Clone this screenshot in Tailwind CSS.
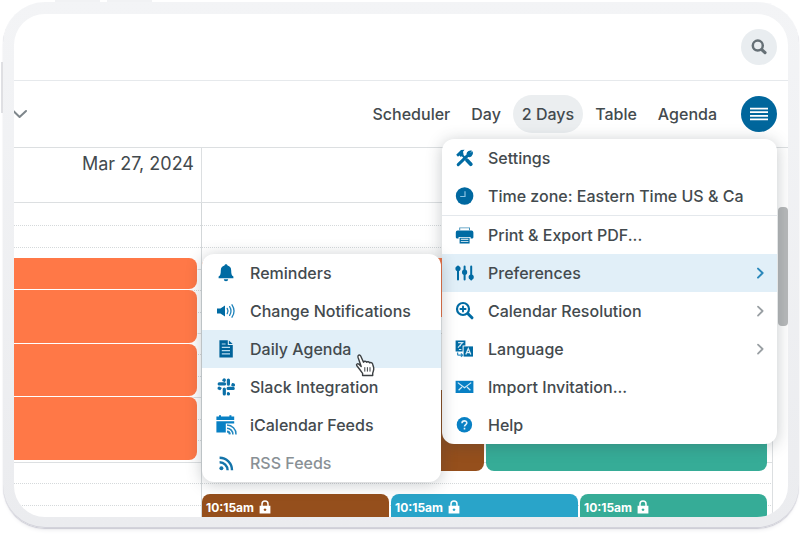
<!DOCTYPE html>
<html lang="en">
<head>
    <meta charset="UTF-8">
    <meta name="viewport" content="width=device-width, initial-scale=1.0">
    <title>Calendar</title>
    <script src="https://cdn.jsdelivr.net/npm/@tailwindcss/browser@4"></script>
</head>
<body class="bg-white font-['Inter','Liberation_Sans',sans-serif] text-[#434a4e]">

    <div class="relative h-screen overflow-hidden pt-[2px] pr-px pb-[14px] pl-[3px]">
        <!-- Device side buttons -->
        <span class="absolute left-px top-[62px] h-[51px] w-[3px] bg-[#dfe0e3]"></span>
        <span class="absolute left-[55px] top-0 h-[3px] w-[45px] bg-[#f1f2f4]"></span>
        <span class="absolute left-[107px] top-0 h-[3px] w-[45px] bg-[#f1f2f4]"></span>

        <div class="relative h-full rounded-[42px] bg-linear-to-b from-[#f3f4f6] to-[#ebecef] pt-3 pr-[11px] pb-[11px] pl-[11px] shadow-[inset_0_-1px_0_#d3d3db,0_1px_1px_#cbcbd4,0_4px_4px_-2px_#ececef]">
            <div class="flex h-full flex-col overflow-hidden rounded-[31px] bg-white">

                <header class="flex h-[67px] shrink-0 items-center justify-end border-b border-[#e6e9ec] pr-[11px]">
                    <button aria-label="Search" class="flex size-9 items-center justify-center rounded-full bg-[#e9edf0]">
                        <svg class="size-[18px]" viewBox="0 0 18 18" fill="none" stroke="#667076" stroke-linecap="round">
                            <circle cx="7.8" cy="7.6" r="5" stroke-width="2.5"/>
                            <path d="M12 11.8 15 14.6" stroke-width="3.2"/>
                        </svg>
                    </button>
                </header>

                <div class="relative z-10 flex h-[67px] shrink-0 items-center justify-between border-b border-[#dcdfe1] pr-[11px]">
                    <button aria-label="Choose period" class="-ml-1">
                        <svg class="h-3 w-[18px]" viewBox="0 0 18 12" fill="none" stroke="#7e868b" stroke-width="2" stroke-linecap="round" stroke-linejoin="round"><path d="M3.4 3 9.6 9 16 3"/></svg>
                    </button>
                    <div class="flex items-center">
                        <nav class="mr-[15px] flex items-center gap-[3px] text-[16px] font-medium">
                            <button class="h-[38px] px-[9px]">Scheduler</button>
                            <button class="h-[38px] px-[9px]">Day</button>
                            <button class="h-[38px] rounded-full bg-[#ebeef0] px-[9px]">2 Days</button>
                            <button class="h-[38px] px-[9px]">Table</button>
                            <button class="h-[38px] px-[9px]">Agenda</button>
                        </nav>
                        <div class="relative">
                            <button aria-label="Menu" class="flex size-9 items-center justify-center rounded-full bg-[#00669c]">
                                <svg class="size-[18px]" viewBox="0 0 18 18" stroke="#fff" stroke-width="1.8"><path d="M0 3.6H18M0 7.2H18M0 10.8H18M0 14.4H18"/></svg>
                            </button>

                            <!-- Main menu -->
                            <ul class="absolute right-0 top-full mt-[7px] w-[335px] rounded-xl bg-white text-[16px] font-medium shadow-[0_2px_16px_rgba(50,60,70,0.28)]">
                                <li><button class="flex h-[38px] w-full items-center gap-[13px] whitespace-nowrap pl-[13px]">
                                    <svg class="size-5 text-[#006ba3]" viewBox="0 0 20 20" fill="none" stroke="currentColor" stroke-linecap="round">
                                        <path d="M3.2 16.6 12 8.2" stroke-width="3"/>
                                        <path d="M15.8 3.2 14 5.2l.8 1L17.2 4.400A3.300 3.300 0 0 1 12.600 8.200 3.300 3.300 0 0 1 15.800 3.200Z" fill="currentColor" stroke-width="1.4"/>
                                        <path d="M6.8 6.8 10 10" stroke-width="2"/>
                                        <path d="M12 12.200 15.800 16.200" stroke-width="3.8"/>
                                        <path d="M1.2 6.800 6 2l3.600-.2-1.600 2 .6 2.800-2.800 2.400-1.400-1.600L3 8.800Z" fill="currentColor" stroke="none"/>
                                    </svg>
                                    Settings
                                </button></li>
                                <li class="border-b border-[#e4e8ec]"><button class="flex h-[38px] w-full items-center gap-[13px] whitespace-nowrap pl-[13px]">
                                    <svg class="size-5" viewBox="0 0 20 20" fill="none">
                                        <circle cx="9.6" cy="10" r="8.8" fill="#0068a0"/>
                                        <path d="M10 5.2V10.5H5.2" stroke="#8cc3e2" stroke-width="1.2"/>
                                    </svg>
                                    Time zone: Eastern Time US &amp; Ca
                                </button></li>
                                <li><button class="flex h-[38px] w-full items-center gap-[13px] whitespace-nowrap pl-[13px]">
                                    <svg class="size-5" viewBox="0 0 20 20" fill="#006ba3">
                                        <path d="M4.2 5.2V2.4h10.8v2.8h-1V3.3H5.2v1.9Z" opacity=".75"/>
                                        <path d="M2.6 5.6H16.6A1.8 1.8 0 0 1 18.400 7.400v4.800a1.400 1.400 0 0 1-1.400 1.400H15.600V12H3.600v1.600H2.200a1.400 1.400 0 0 1-1.400-1.400V7.400A1.800 1.800 0 0 1 2.600 5.600Z"/>
                                        <path d="M4.6 12.800H14.600V18.400H4.600Zm1.200 1v.9h7.600v-.9Zm0 2.100v.9h7.600v-.9Z" fill-rule="evenodd"/>
                                    </svg>
                                    Print &amp; Export PDF...
                                </button></li>
                                <li class="relative">
                                    <button class="flex h-[38px] w-full items-center gap-[13px] whitespace-nowrap bg-[#e1eff8] pl-[13px] pr-[11px]">
                                        <svg class="size-5" viewBox="0 0 20 20" fill="#006ba3" stroke="#006ba3" stroke-width="2" stroke-linecap="round">
                                            <path d="M3 3.400V16.600M9.600 3.400V16.600M16.200 3.400V16.600"/>
                                            <circle cx="3" cy="5.600" r="1.600"/><circle cx="9.600" cy="9.200" r="1.600"/><circle cx="16.200" cy="14" r="1.600"/>
                                        </svg>
                                        Preferences
                                        <svg class="ml-auto size-3" viewBox="0 0 12 12" fill="none" stroke="#2b88bb" stroke-width="2" stroke-linecap="round" stroke-linejoin="round"><path d="M4 1.6 8.6 6 4 10.6"/></svg>
                                    </button>

                                    <!-- Preferences submenu -->
                                    <ul class="absolute right-full top-0 mr-px w-[239px] rounded-xl bg-white shadow-[0_2px_16px_rgba(50,60,70,0.28)]">
                                        <li><button class="flex h-[38px] w-full items-center gap-3 whitespace-nowrap pl-[14px]">
                                            <svg class="h-5 w-[22px]" viewBox="0 0 22 20" fill="#006ba3">
                                                <path d="M10 1.200C10.900 1.200 11.500 1.800 11.500 2.600 14 3.200 15.200 5 15.200 7.400 15.200 11 15.700 12.400 17.400 13.600V15.200H2.600V13.600C4.300 12.400 4.800 11 4.800 7.400 4.800 5 6 3.200 8.500 2.600 8.500 1.800 9.100 1.200 10 1.200Z"/>
                                                <path d="M7.800 16.200H12.200A2.200 2 0 0 1 7.800 16.200Z"/>
                                            </svg>
                                            Reminders
                                        </button></li>
                                        <li><button class="flex h-[38px] w-full items-center gap-3 whitespace-nowrap pl-[14px]">
                                            <svg class="h-5 w-[22px]" viewBox="0 0 22 20" fill="none" stroke="#1f83bb" stroke-width="1.3" stroke-linecap="round">
                                                <path d="M1 7.400H4.400L9 4.400V15.600L4.400 12.600H1Z" fill="#006ba3" stroke="none"/>
                                                <path d="M11.200 7.400Q12.800 10 11.200 12.600M13.600 5.600Q16.400 10 13.600 14.400M16 3.800Q20.100 10 16 16.200"/>
                                            </svg>
                                            Change Notifications
                                        </button></li>
                                        <li class="relative">
                                            <button class="flex h-[38px] w-full items-center gap-3 whitespace-nowrap bg-[#e1eff8] pl-[14px]">
                                                <svg class="h-5 w-[22px]" viewBox="0 0 22 20">
                                                    <path d="M3.4 1.2H11.8V6H16.800V18.600H3.400Z" fill="#00639a"/>
                                                    <path d="M12.900 1.400 16.700 5H12.900Z" fill="#00639a"/>
                                                    <path d="M5.800 5H9.600M5.800 8.300H14M5.800 11.600H14M5.800 14.900H14" stroke="#b9dcef" stroke-width="1.2"/>
                                                </svg>
                                                Daily Agenda
                                            </button>
                                            <!-- Hand pointer -->
                                            <svg class="absolute left-[153px] top-[23px] h-6 w-[21px]" viewBox="0 0 21 24" fill="#fff" stroke="#3b3f42" stroke-width="1.4" stroke-linejoin="round">
                                                <path d="M7.600 22.500V20.400L4.400 16 1.700 12.500C1 11.300 2.600 10.200 3.700 11.100L6.200 13.600 3 4.300C2.400 2.200 4.700 1 5.700 3L8.500 9.200C9 7.800 11.200 7.900 11.700 9.300 12.300 8.300 14.200 8.500 14.600 9.900 15.500 9.100 17.300 9.500 17.700 11.200L18.700 14.800C19.100 17 18 18.600 17.700 20.200V22.500Z"/>
                                                <path d="M9.800 14.200V18.600M12.400 14.200V18.600M15 14.200V18.600" fill="none" stroke-width="1"/>
                                            </svg>
                                        </li>
                                        <li><button class="flex h-[38px] w-full items-center gap-3 whitespace-nowrap pl-[14px]">
                                            <svg class="h-5 w-[22px]" viewBox="0 0 22 20" fill="none" stroke="#0b70a8" stroke-width="3.2" stroke-linecap="round">
                                                <path d="M8.200 2.900V2.800M8.500 6.900H3.200M12.400 3V7.200M17.500 7.900H17.400M12.100 11.400H17.200M12.400 16.900V16.800M8.300 12V17M3.100 11.200H3.200"/>
                                                <path d="M7.200 3.400H8.500V4M16.600 7V8.100H16M13 16.700H12.100V15.900M4 12.300V11.200H4.700" stroke-width="1.8"/>
                                            </svg>
                                            Slack Integration
                                        </button></li>
                                        <li><button class="flex h-[38px] w-full items-center gap-3 whitespace-nowrap pl-[14px]">
                                            <svg class="h-5 w-[22px]" viewBox="0 0 22 20">
                                                <path d="M.4 1.400H3V.2H5V1.400H13.400V.2H15.400V1.400H18.200V5H.4ZM.4 6.200H18.200V8.600H9.800V17.400H.4Z" fill="#0880c4"/>
                                                <g fill="none" stroke="#2288c0" stroke-width="1.500">
                                                    <path d="M11 10.100A9 9 0 0 1 20 19.400M11 13.300A6 6 0 0 1 16.900 19.400"/>
                                                    <path d="M11 16.500A3 3 0 0 1 13.800 19.400" stroke-width="2"/>
                                                </g>
                                            </svg>
                                            iCalendar Feeds
                                        </button></li>
                                        <li><button class="flex h-[38px] w-full items-center gap-3 whitespace-nowrap pl-[14px] text-[#899095]">
                                            <svg class="h-5 w-[22px]" viewBox="0 0 22 20" fill="none" stroke="#1474aa" stroke-width="2.4">
                                                <circle cx="5.400" cy="15.300" r="2" fill="#1474aa" stroke="none"/>
                                                <path d="M3.600 9.200A8 8 0 0 1 11.600 17.200M3.600 4.800A12.400 12.400 0 0 1 16 17.200"/>
                                            </svg>
                                            RSS Feeds
                                        </button></li>
                                    </ul>
                                </li>
                                <li><button class="flex h-[38px] w-full items-center gap-[13px] whitespace-nowrap pl-[13px] pr-[11px]">
                                    <svg class="size-5" viewBox="0 0 20 20" fill="none" stroke="#006ba3" stroke-linecap="round">
                                        <circle cx="8" cy="8" r="6" stroke-width="2.200"/>
                                        <path d="M8 5.400V10.600M5.400 8H10.600" stroke-width="1.900"/>
                                        <path d="M13.200 13 17 16.800" stroke-width="3"/>
                                    </svg>
                                    Calendar Resolution
                                    <svg class="ml-auto size-3" viewBox="0 0 12 12" fill="none" stroke="#999fa3" stroke-width="1.8" stroke-linecap="round" stroke-linejoin="round"><path d="M4 1.6 8.6 6 4 10.6"/></svg>
                                </button></li>
                                <li><button class="flex h-[38px] w-full items-center gap-[13px] whitespace-nowrap pl-[13px] pr-[11px]">
                                    <svg class="size-5" viewBox="0 0 20 20" fill="none">
                                        <path d="M.6 1.400H10.400V6.400H7.600V12.400H.6Z" fill="#006ba3"/>
                                        <path d="M8.600 7.400H18V17.600H8.600Z" fill="#006ba3"/>
                                        <path d="M3.100 3.600H7.600L5.400 5.800 3 8.600M5.400 5.800V7.200M3.900 10.500H6.400" stroke="#cfe6f3" stroke-width="1.200"/>
                                        <path d="M10.800 15.600 13.300 9.600 15.800 15.600M11.800 13.700H14.800" stroke="#dcedf6" stroke-width="1.300"/>
                                        <path d="M2.600 13.600V15.200Q2.600 16.200 3.600 16.200H7.200M6 14.400 7.600 16.200 6 17.800" stroke="#2f8cc0" stroke-width="1.300"/>
                                    </svg>
                                    Language
                                    <svg class="ml-auto size-3" viewBox="0 0 12 12" fill="none" stroke="#999fa3" stroke-width="1.8" stroke-linecap="round" stroke-linejoin="round"><path d="M4 1.6 8.6 6 4 10.6"/></svg>
                                </button></li>
                                <li><button class="flex h-[38px] w-full items-center gap-[13px] whitespace-nowrap pl-[13px]">
                                    <svg class="size-5" viewBox="0 0 20 20" fill="none" stroke="#d3eaf7" stroke-width="1.2">
                                        <path d="M.6 3.800H18.400V16H.6Z" fill="#0880c4" stroke="none"/>
                                        <path d="M2.800 5.600 9.500 10.800 16.200 5.600M3.600 13.200 7 10M15.400 13.200 12 10"/>
                                    </svg>
                                    Import Invitation...
                                </button></li>
                                <li><button class="flex h-[38px] w-full items-center gap-[13px] whitespace-nowrap pl-[13px]">
                                    <svg class="size-5" viewBox="0 0 20 20" fill="none" stroke="#e3f2fa" stroke-width="1.6">
                                        <circle cx="9.400" cy="9.800" r="7.700" fill="#0880c4" stroke="none"/>
                                        <path d="M7 8.200C7 5 11.900 5.200 11.800 8 11.700 9.600 9.500 9.600 9.500 11.500M9.500 12.800V14.400"/>
                                    </svg>
                                    Help
                                </button></li>
                            </ul>
                        </div>
                    </div>
                </div>

                <!-- Day headings -->
                <div class="flex h-[55px] shrink-0 pr-[15px] text-[18px]">
                    <div class="w-[188px] border-r border-b border-[#dcdfe1] pt-1 pr-[7px] text-right leading-6">Mar 27, 2024</div>
                    <div class="flex-1 border-r border-b border-[#dcdfe1]"></div>
                </div>

                <!-- Time grid with the events stacked over it -->
                <div class="grid min-h-0 flex-1 overflow-hidden">
                    <div class="col-start-1 row-start-1 mr-[15px]">
                        <div class="h-[23px] border-b border-dotted border-[#d5d9db]"></div>
                        <div class="h-[22px] border-b border-dotted border-[#d5d9db]"></div>
                        <div class="h-[22px] border-b border-[#dcdfe1]"></div>
                        <div class="h-[21px] border-b border-dotted border-[#d5d9db]"></div>
                        <div class="h-[22px] border-b border-dotted border-[#d5d9db]"></div>
                        <div class="h-[21px] border-b border-[#dcdfe1]"></div>
                        <div class="h-[21px] border-b border-dotted border-[#d5d9db]"></div>
                        <div class="h-[22px] border-b border-dotted border-[#d5d9db]"></div>
                        <div class="h-[21px] border-b border-[#dcdfe1]"></div>
                        <div class="h-[22px] border-b border-dotted border-[#d5d9db]"></div>
                        <div class="h-[21px] border-b border-dotted border-[#d5d9db]"></div>
                        <div class="h-[22px] border-b border-[#dcdfe1]"></div>
                        <div class="h-[21px] border-b border-dotted border-[#d5d9db]"></div>
                        <div class="h-[22px] border-b border-dotted border-[#d5d9db]"></div>
                    </div>

                    <div class="col-start-1 row-start-1 flex">
                        <div class="flex w-[188px] flex-col gap-px border-r border-[#d3d7d9] pt-[55px] pr-1">
                            <div class="h-[31px] rounded-r-lg bg-[#ff7847] ring-1 ring-white/60"></div>
                            <div class="h-[53px] rounded-r-lg bg-[#ff7847] ring-1 ring-white/60"></div>
                            <div class="h-[52px] rounded-r-lg bg-[#ff7847] ring-1 ring-white/60"></div>
                            <div class="h-[63px] rounded-r-lg bg-[#ff7847] ring-1 ring-white/60"></div>
                        </div>

                        <div class="flex flex-1 flex-col border-r border-[#dcdfe1] pt-[55px] pr-[5px]">
                            <div class="h-[59px] w-1/2 rounded-lg bg-[#ff7847]"></div>
                            <div class="mt-[73px] grid h-[81px] grid-cols-2 gap-[2px]">
                                <div class="rounded-lg bg-[#954f1c]"></div>
                                <div class="rounded-lg bg-[#36ac97]"></div>
                            </div>
                            <div class="mt-[23px] grid h-16 grid-cols-3 gap-[2px] text-[12px] font-bold leading-4 text-white">
                                <div class="flex items-start gap-[5px] rounded-t-lg bg-[#954f1c] pt-[6px] pl-1">
                                    10:15am
                                    <svg class="h-[14px] w-3" viewBox="0 0 12 14"><path d="M3 6V4a3 3 0 0 1 6 0V6" fill="none" stroke="#fff" stroke-width="1.5"/><path d="M.6 5.800H11.400V13.500H.6ZM6 8.400a1.300 1.300 0 1 0 .01 0Z" fill="#fff" fill-rule="evenodd"/></svg>
                                </div>
                                <div class="flex items-start gap-[5px] rounded-t-lg bg-[#29a4c9] pt-[6px] pl-1">
                                    10:15am
                                    <svg class="h-[14px] w-3" viewBox="0 0 12 14"><path d="M3 6V4a3 3 0 0 1 6 0V6" fill="none" stroke="#fff" stroke-width="1.5"/><path d="M.6 5.800H11.400V13.500H.6ZM6 8.400a1.300 1.300 0 1 0 .01 0Z" fill="#fff" fill-rule="evenodd"/></svg>
                                </div>
                                <div class="flex items-start gap-[5px] rounded-t-lg bg-[#36ac97] pt-[6px] pl-1">
                                    10:15am
                                    <svg class="h-[14px] w-3" viewBox="0 0 12 14"><path d="M3 6V4a3 3 0 0 1 6 0V6" fill="none" stroke="#fff" stroke-width="1.5"/><path d="M.6 5.800H11.400V13.500H.6ZM6 8.400a1.300 1.300 0 1 0 .01 0Z" fill="#fff" fill-rule="evenodd"/></svg>
                                </div>
                            </div>
                        </div>

                        <!-- Scrollbar -->
                        <div class="w-[15px] pt-1 pl-[5px]">
                            <div class="h-[119px] rounded-sm bg-[#b7b9ba]"></div>
                        </div>
                    </div>
                </div>
            </div>
        </div>
    </div>

</body>
</html>
